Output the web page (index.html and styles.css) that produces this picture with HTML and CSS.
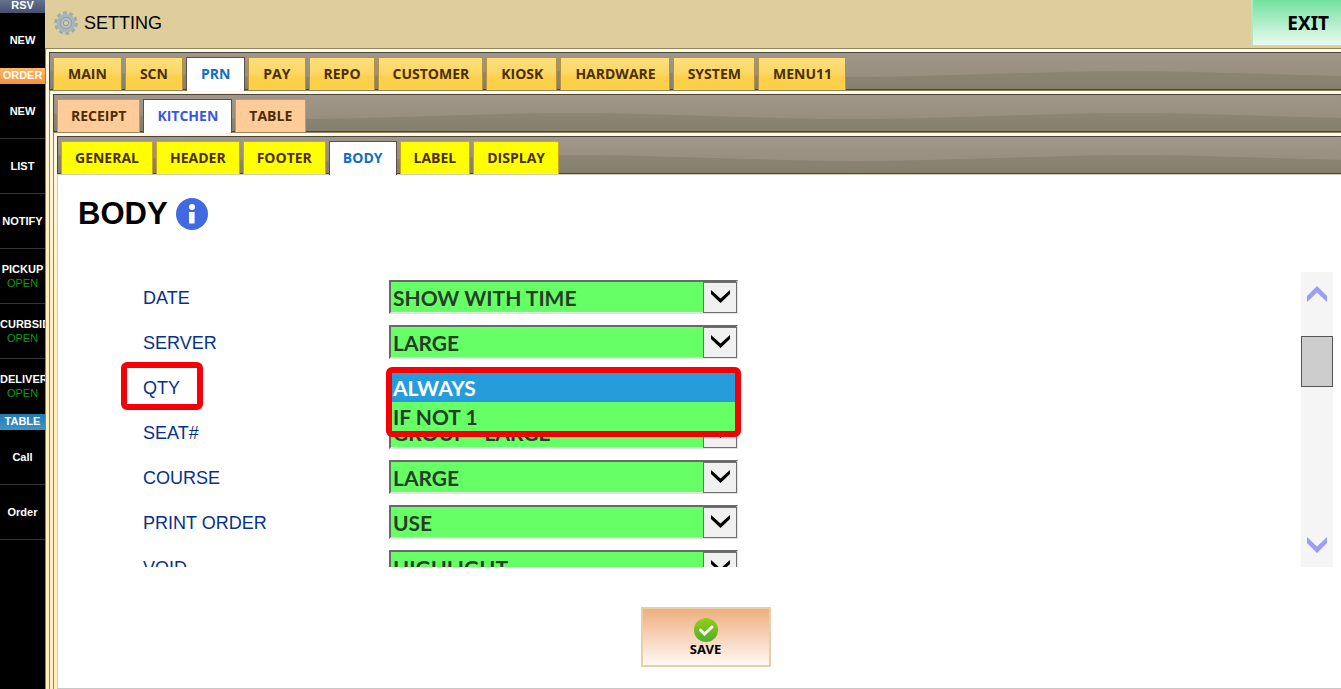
FILE: index.html
```html
<!DOCTYPE html>
<html lang="en">
<head>
<meta charset="utf-8">
<title>Setting</title>
<link rel="stylesheet" href="styles.css">
</head>
<body>
<div class="app">
  <nav class="side">
    <h2 class="side-head side-rsv">RSV</h2>
    <button class="side-item side-last">NEW</button>
    <h2 class="side-head side-order">ORDER</h2>
    <button class="side-item">NEW</button>
    <button class="side-item">LIST</button>
    <button class="side-item">NOTIFY</button>
    <button class="side-item">PICKUP<span class="open">OPEN</span></button>
    <button class="side-item side-wide">CURBSIDE<span class="open">OPEN</span></button>
    <button class="side-item side-wide side-last">DELIVERY<span class="open">OPEN</span></button>
    <h2 class="side-head side-table">TABLE</h2>
    <button class="side-item">Call</button>
    <button class="side-item">Order</button>
  </nav>
  <div class="main">
    <header class="top">
      <svg class="gear" viewBox="0 0 24 24">
        <circle cx="12" cy="12" r="10" fill="none" stroke="#9aa8aa" stroke-width="3.500" stroke-dasharray="3.600 2.680"/>
        <circle cx="12" cy="12" r="6.500" fill="none" stroke="#a9b6ba" stroke-width="6"/>
        <circle cx="12" cy="12" r="5.800" fill="none" stroke="#93a2a5" stroke-width="1"/>
        <circle cx="12" cy="12" r="4.600" fill="#b7c2c4"/>
        <circle cx="12" cy="12" r="2.600" fill="#dfce9c" stroke="#8a999c" stroke-width="1"/>
      </svg>
      <h1 class="title">SETTING</h1>
      <button class="exit">EXIT</button>
    </header>
    <div class="panel">
      <div class="tabs gold">
        <button class="tab">MAIN</button><button class="tab">SCN</button><button class="tab on">PRN</button><button class="tab">PAY</button><button class="tab tight">REPO</button><button class="tab tight">CUSTOMER</button><button class="tab tight">KIOSK</button><button class="tab tight">HARDWARE</button><button class="tab tight">SYSTEM</button><button class="tab tight">MENU11</button>
      </div>
      <div class="panel">
        <div class="tabs peach">
          <button class="tab">RECEIPT</button><button class="tab on">KITCHEN</button><button class="tab">TABLE</button>
        </div>
        <div class="panel">
          <div class="tabs yellow">
            <button class="tab">GENERAL</button><button class="tab">HEADER</button><button class="tab">FOOTER</button><button class="tab on">BODY</button><button class="tab">LABEL</button><button class="tab">DISPLAY</button>
          </div>
          <main class="content">
            <div class="heading">
              <h2>BODY</h2>
              <svg class="info" viewBox="0 0 32 32"><circle cx="16" cy="16" r="16" fill="#4169e1"/><circle cx="16" cy="9" r="3" fill="#fff"/><path d="M13 14h5.600v11.500H13z" fill="#fff"/></svg>
            </div>
            <div class="scroller">
              <form class="rows">
                <div class="row"><label for="date">DATE</label><div class="pick"><select id="date"><option>SHOW WITH TIME</option></select><svg class="chev" viewBox="0 0 32 29"><path d="M7 7v4l9.500 9 9.500-9V7l-9.500 8.500z"/></svg></div></div>
                <div class="row"><label for="server">SERVER</label><div class="pick"><select id="server"><option>LARGE</option></select><svg class="chev" viewBox="0 0 32 29"><path d="M7 7v4l9.500 9 9.500-9V7l-9.500 8.500z"/></svg></div></div>
                <div class="row"><label for="qty" class="marked">QTY</label><div class="pick"><select id="qty"><option>ALWAYS</option></select><div class="menu" role="listbox"><div class="opt sel" role="option" aria-selected="true">ALWAYS</div><div class="opt" role="option">IF NOT 1</div></div></div></div>
                <div class="row"><label for="seat">SEAT#</label><div class="pick"><select id="seat"><option>GROUP - LARGE</option></select><svg class="chev" viewBox="0 0 32 29"><path d="M7 7v4l9.500 9 9.500-9V7l-9.500 8.500z"/></svg></div></div>
                <div class="row"><label for="course">COURSE</label><div class="pick"><select id="course"><option>LARGE</option></select><svg class="chev" viewBox="0 0 32 29"><path d="M7 7v4l9.500 9 9.500-9V7l-9.500 8.500z"/></svg></div></div>
                <div class="row"><label for="order">PRINT ORDER</label><div class="pick"><select id="order"><option>USE</option></select><svg class="chev" viewBox="0 0 32 29"><path d="M7 7v4l9.500 9 9.500-9V7l-9.500 8.500z"/></svg></div></div>
                <div class="row"><label for="void">VOID</label><div class="pick"><select id="void"><option>HIGHLIGHT</option></select><svg class="chev" viewBox="0 0 32 29"><path d="M7 7v4l9.500 9 9.500-9V7l-9.500 8.500z"/></svg></div></div>
              </form>
              <div class="bar">
                <button class="arrow" aria-label="Scroll up"><svg viewBox="0 0 20 16"><path d="M10 0l10 10v6L10 6.500 0 16v-6z"/></svg></button>
                <div class="thumb"></div>
                <button class="arrow arrow-down" aria-label="Scroll down"><svg viewBox="0 0 20 16"><path d="M10 16L0 6V0l10 9.500L20 0v6z"/></svg></button>
              </div>
            </div>
            <button class="save">
              <svg viewBox="0 0 24 24"><defs><linearGradient id="g" x2="0" y2="1"><stop stop-color="#93cf16"/><stop offset="1" stop-color="#4fae2c"/></linearGradient></defs><circle cx="12" cy="12" r="12" fill="url(#g)"/><path d="M6.500 12l4 4 7.500-7" fill="none" stroke="#fff" stroke-width="3" stroke-linecap="round"/></svg>
              SAVE
            </button>
          </main>
        </div>
      </div>
    </div>
  </div>
</div>
</body>
</html>
```
FILE: styles.css
```css
*, *::after { box-sizing: border-box; }
body { margin: 0; font-family: "Liberation Sans", Arial, sans-serif; background: #fff; }
button { font: inherit; margin: 0; padding: 0; border: 0; background: none; color: inherit; }
h1, h2 { margin: 0; }

.app { display: flex; height: 100vh; overflow: hidden; }

.side { flex: 0 0 45px; overflow: hidden; display: flex; flex-direction: column; background: #000; color: #fff; margin-top: -3px; }
.side-head { flex: none; height: 16px; font-size: 11px; line-height: 16px; font-weight: bold; text-align: center; }
.side-rsv { background: linear-gradient(#6f7895, #46506e); }
.side-order { line-height: 15px; background: linear-gradient(#ffb765, #f5913a); }
.side-table { line-height: 15px; background: linear-gradient(#2479ab, #3d95c6); }
.side-item { flex: none; height: 55px; display: flex; flex-direction: column; justify-content: center; align-items: center; font-size: 11px; line-height: 14px; font-weight: bold; border-bottom: 1px solid #333; }
.side-last { border-bottom-color: #000; }
.side-wide { align-items: flex-start; }
.open { color: #0a9a18; font-weight: normal; align-self: center; }

.main { flex: 1; min-width: 0; display: flex; flex-direction: column; }
.top { flex: 0 0 48px; display: flex; align-items: flex-start; padding-left: 9px; gap: 6px; background: #dfce9c; }
.gear { width: 24px; height: 24px; margin-top: 11px; }
.title { font-size: 18px; line-height: 46px; font-weight: normal; color: #000; }
.exit { margin-left: auto; width: 90px; height: 46px; padding-right: 12px; text-align: right; font: bold 19px "Noto Sans", sans-serif; color: #000; background: linear-gradient(#72e2a0, #ecfaf1); border: 1px solid #a9ecc4; border-width: 0 0 1px 2px; }

.panel { flex: 1; min-height: 0; display: flex; flex-direction: column; border: 1px solid #8f8560; border-width: 1px 0 0 1px; padding: 3px 0 0 3px; background: linear-gradient(#fff8e4, #ffefc0 200px); }
.tabs { flex: none; height: 38px; display: flex; align-items: flex-start; gap: 3px; padding: 4px 0 0 3px; border: 1px solid #4b443a; border-right: 0; background: url("data:image/svg+xml,%3Csvg xmlns='http://www.w3.org/2000/svg' width='560' height='36'%3E%3Cpath d='M0 24C90 24 190 18 280 18S470 24 560 24V36H0z' fill='%23605a42' fill-opacity='.22'/%3E%3C/svg%3E") 238px 0 repeat-x, linear-gradient(#a0978a, #938a79); }
.tab { flex: none; height: 33px; padding: 0 14px 2px; font: bold 14px "Open Sans", "Noto Sans", sans-serif; color: #4a2e08; border: 1px solid #b8923a; border-bottom: 0; }
.tab.tight { padding-right: 13px; }
.gold .tab { background: linear-gradient(#fddf7b, #fbd662 50%, #fdd04a 60%, #fdd047); }
.peach .tab, .yellow .tab { padding: 0 13px 2px; }
.peach .tab { background: #ffcc99; border-color: #cf9a3c; }
.yellow .tab { background: #ffff00; border-color: #c9a520; }
.tabs .tab.on { height: 34px; background: #fff; border-color: #5a5242; color: #0f6fc0; position: relative; }
.peach .tab.on { color: #3b55e6; }

.content { flex: 1; min-height: 0; display: flex; flex-direction: column; background: #fff; border: 1px solid #d0cdb8; border-right: 0; border-bottom-color: #c8c8c8; padding: 23px 8px 21px 20px; }
.heading { display: flex; align-items: center; gap: 8px; margin-bottom: 42px; }
.heading h2 { font-size: 31px; line-height: 32px; }
.info { width: 32px; height: 32px; }
.scroller { flex: 1; min-height: 0; display: flex; overflow: hidden; }
.rows { flex: 1; padding: 8px 0 0 65px; display: flex; flex-direction: column; gap: 11px; }
.row { flex: none; height: 34px; display: flex; }
.row label { flex: 0 0 246px; font-size: 18px; line-height: 36px; color: #06318a; }
.marked { position: relative; }
.marked::after { content: ""; position: absolute; left: -22px; top: -8px; width: 82px; height: 48px; border: 6px solid #f60007; border-radius: 6px; }
.pick { position: relative; width: 349px; height: 34px; }
.pick select { appearance: none; width: 100%; height: 34px; margin: 0; padding: 0 36px 0 2px; border: 2px solid; border-color: #696969 #e3e3e3 #e3e3e3 #696969; border-radius: 0; background: #66ff66; color: #283c28; font: bold 21px Lato, sans-serif; }
.chev { position: absolute; right: 1px; top: 2px; width: 34px; height: 31px; background: #f0f0f0; border: 1px solid #6f6f6f; pointer-events: none; }
.menu { position: absolute; z-index: 1; left: -3px; top: -3px; width: 355px; border: 6px solid #f60007; border-radius: 6px; background: #66ff66; }
.opt { padding-left: 1px; font: bold 21px/29px Lato, sans-serif; color: #283c28; }
.opt.sel { background: #269dda; color: #fff; }

.bar { flex: 0 0 32px; display: flex; flex-direction: column; background: #f5f5f5; }
.arrow { height: 44px; display: flex; align-items: center; justify-content: center; }
.arrow svg { width: 20px; height: 16px; fill: #9c9cfb; }
.thumb { height: 51px; margin-top: 20px; background: #cdcdcd; border: 1px solid #555; }
.arrow-down { margin-top: auto; }

.save { align-self: center; flex: none; margin-top: 40px; width: 130px; height: 60px; display: flex; flex-direction: column; align-items: center; justify-content: center; font: bold 13px/15px "Noto Sans", sans-serif; color: #000; background: linear-gradient(#efaf80, #fff8f4); border: 2px solid #e6cfa6; }
.save svg { width: 24px; height: 24px; }
```
